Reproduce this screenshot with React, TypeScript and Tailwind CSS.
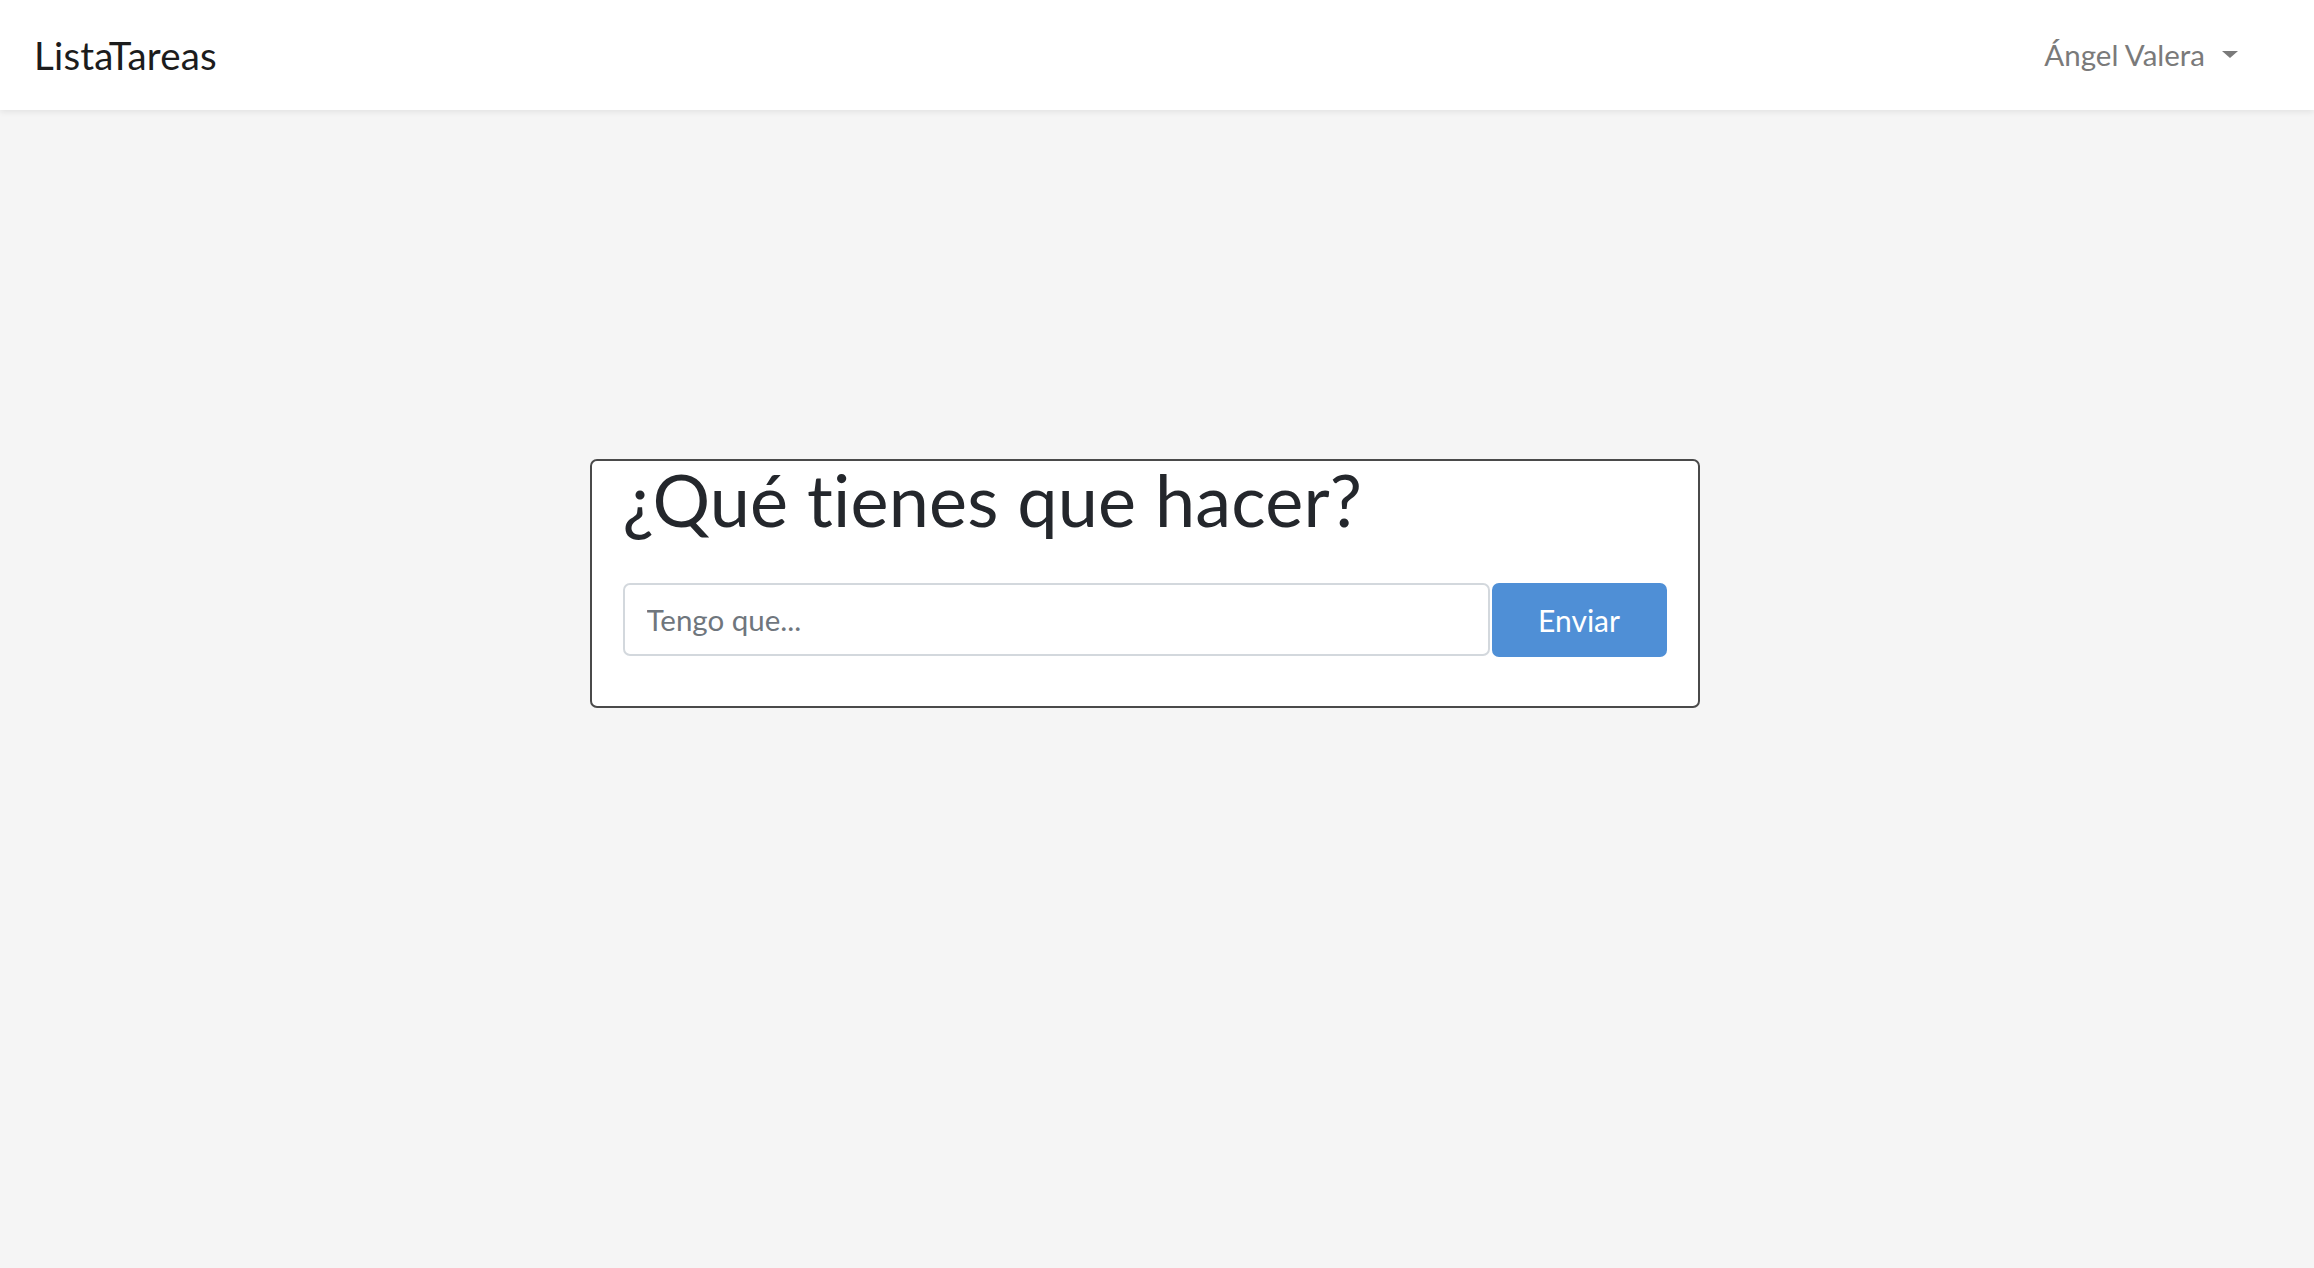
import React, { useState } from 'react';

// navbar + single task form card
const Navbar = () => {
    return (
        <nav className="h-[110px] bg-white flex items-center justify-between pl-[34px] pr-[76px] shadow-[0_2px_6px_rgba(0,0,0,0.08)] relative z-10">
            <a href="#" className="text-[38.5px] leading-none text-[#1c1c1c] tracking-[0.2px]">ListaTareas</a>
            <button className="flex items-center gap-[17px] text-[29.5px] leading-none text-[#7a7a7a]">
                <span>Ángel Valera</span>
                <span className="w-0 h-0 border-l-[8.5px] border-r-[8.5px] border-t-[7px] border-l-transparent border-r-transparent border-t-[#7a7a7a] mb-[2px]"></span>
            </button>
        </nav>
    );
};

const App = () => {
    const [task, setTask] = useState<string>("");

    return (
        <div className="min-h-screen bg-[#f5f5f5] font-['Lato','Open_Sans',sans-serif]">
            <Navbar />
            <main className="flex justify-center pt-[349px] pr-[25px]">
                <div className="w-[1110px] bg-white border-2 border-[#4a4a4a] rounded-[7px] px-[31px] pb-[49px]">
                    <h1 className="text-[72px] leading-[78px] text-[#24272c] font-normal mt-[-1px] mb-[45px] tracking-[0.2px]">¿Qué tienes que hacer?</h1>
                    <form className="flex gap-[2px]" onSubmit={e => e.preventDefault()}>
                        <input
                            type="text"
                            value={task}
                            onChange={e => setTask(e.target.value)}
                            placeholder="Tengo que..."
                            className="flex-1 h-[73px] border-2 border-[#d3d8dd] rounded-[7px] px-[22px] text-[29.5px] text-[#495057] placeholder:text-[#6f767d] outline-none"
                        />
                        <button className="w-[175px] h-[74px] rounded-[7px] bg-[#4f8fd6] text-white text-[30px]">Enviar</button>
                    </form>
                </div>
            </main>
        </div>
    );
};

export default App;
